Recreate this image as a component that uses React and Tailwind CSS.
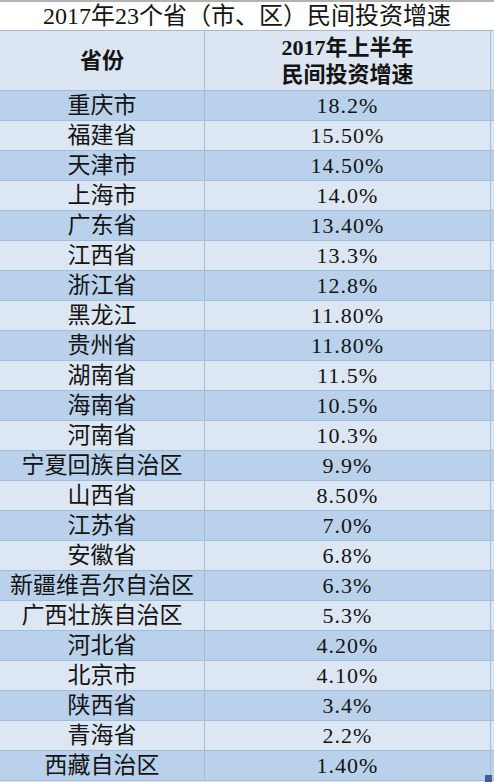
const rows = [
  ["重庆市", "18.2%"],
  ["福建省", "15.50%"],
  ["天津市", "14.50%"],
  ["上海市", "14.0%"],
  ["广东省", "13.40%"],
  ["江西省", "13.3%"],
  ["浙江省", "12.8%"],
  ["黑龙江", "11.80%"],
  ["贵州省", "11.80%"],
  ["湖南省", "11.5%"],
  ["海南省", "10.5%"],
  ["河南省", "10.3%"],
  ["宁夏回族自治区", "9.9%"],
  ["山西省", "8.50%"],
  ["江苏省", "7.0%"],
  ["安徽省", "6.8%"],
  ["新疆维吾尔自治区", "6.3%"],
  ["广西壮族自治区", "5.3%"],
  ["河北省", "4.20%"],
  ["北京市", "4.10%"],
  ["陕西省", "3.4%"],
  ["青海省", "2.2%"],
  ["西藏自治区", "1.40%"],
];

export default function App() {
  return (
    <div className="relative w-[494px] h-[782px] bg-[#dce6f2] text-[#141414] font-['Liberation_Serif','Noto_Sans_CJK_SC',serif] overflow-hidden">
      {/* title */}
      <div className="h-[31px] bg-white border-t-2 border-t-[#b3b3b3] border-b border-b-[#a8b9cf] flex items-center justify-center text-[24px] leading-none">
        2017年23个省（市、区）民间投资增速
      </div>

      {/* header */}
      <div className="h-[60px] flex border-b border-[#a3bedd] bg-[#dce6f2]">
        <div className="w-[205px] border-r border-[#a3bedd] flex items-center justify-center text-[22px] font-bold leading-none">
          省份
        </div>
        <div className="w-[286px] border-r border-[#a3bedd] flex flex-col items-center justify-center text-[22px] font-bold leading-[27px]">
          <span>2017年上半年</span>
          <span>民间投资增速</span>
        </div>
      </div>

      {rows.map(([name, value], i) => (
        <div
          key={name}
          className={`h-[30px] flex border-b border-[#a3bedd] ${i % 2 === 0 ? "bg-[#b9d1ea]" : "bg-[#dce7f3]"}`}
        >
          <div className="w-[205px] border-r border-[#a3bedd] flex items-center justify-center text-[23px] leading-none whitespace-nowrap">
            {name}
          </div>
          <div className="w-[286px] border-r border-[#a3bedd] flex items-center justify-center text-[22px] leading-none tracking-[1px]">
            {value}
          </div>
        </div>
      ))}

      {/* resize handle */}
      <div className="absolute right-[2px] bottom-0 w-[7px] h-[7px] bg-[#3f5f99]" />
    </div>
  );
}
